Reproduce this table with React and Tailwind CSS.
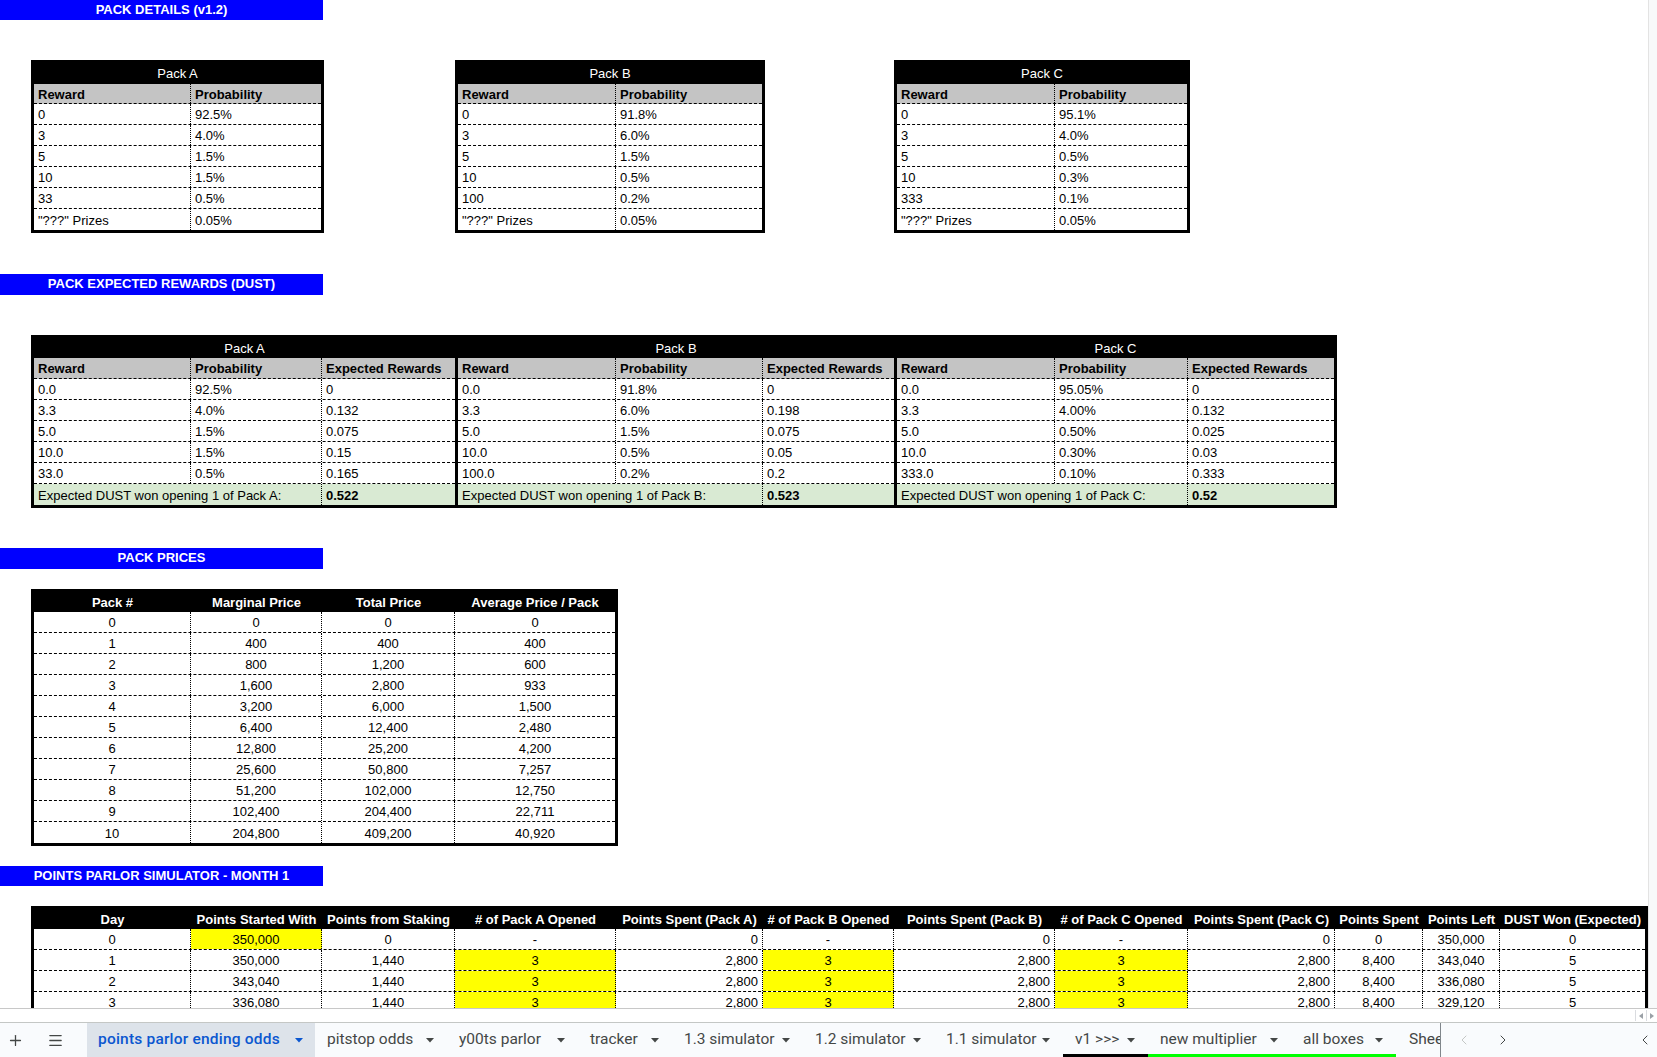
import React from "react";
import { Plus, Menu, ChevronLeft, ChevronRight } from "lucide-react";

function Cell({ w = "", last = false, align = "left", bold = false, bg = "", children }) {
  const al =
    align === "center"
      ? "justify-center"
      : align === "right"
      ? "justify-end pr-[4px]"
      : "justify-start pl-[4px]";
  return (
    <div
      className={`flex items-center h-full pt-[3px] whitespace-nowrap overflow-hidden ${al} ${
        bold ? "font-bold" : ""
      } ${last ? "flex-1" : `${w} shrink-0 border-r border-dotted border-black`} ${bg}`}
    >
      {children}
    </div>
  );
}

function Bar({ title, h }) {
  return (
    <div className={`w-[323px] ${h} bg-[#0000ff] text-white font-bold flex items-center justify-center`}>
      {title}
    </div>
  );
}

const DETAILS = [
  {
    name: "Pack A",
    outer: "w-[293px]",
    first: "w-[157px]",
    rows: [["0", "92.5%"], ["3", "4.0%"], ["5", "1.5%"], ["10", "1.5%"], ["33", "0.5%"], ['"???" Prizes', "0.05%"]],
  },
  {
    name: "Pack B",
    outer: "w-[310px] ml-[131px]",
    first: "w-[158px]",
    rows: [["0", "91.8%"], ["3", "6.0%"], ["5", "1.5%"], ["10", "0.5%"], ["100", "0.2%"], ['"???" Prizes', "0.05%"]],
  },
  {
    name: "Pack C",
    outer: "w-[296px] ml-[129px]",
    first: "w-[158px]",
    rows: [["0", "95.1%"], ["3", "4.0%"], ["5", "0.5%"], ["10", "0.3%"], ["333", "0.1%"], ['"???" Prizes', "0.05%"]],
  },
];

function PackDetail({ d }) {
  return (
    <div className={`${d.outer} shrink-0 border-[3px] border-black flex flex-col`}>
      <div className="h-[21px] pt-[2px] bg-black text-white flex items-center justify-center">{d.name}</div>
      <div className="flex h-[20px] bg-[#c4c4c4] border-b border-dashed border-black font-bold">
        <Cell w={d.first}>Reward</Cell>
        <Cell last>Probability</Cell>
      </div>
      {d.rows.map((r, i) => (
        <div
          key={i}
          className={`flex h-[21px] ${i < d.rows.length - 1 ? "border-b border-dashed border-black" : ""}`}
        >
          <Cell w={d.first}>{r[0]}</Cell>
          <Cell last>{r[1]}</Cell>
        </div>
      ))}
    </div>
  );
}

const EXP = [
  {
    name: "Pack A",
    block: "w-[421px]",
    c1: "w-[157px]",
    c2: "w-[131px]",
    tot: "w-[288px]",
    rows: [
      ["0.0", "92.5%", "0"],
      ["3.3", "4.0%", "0.132"],
      ["5.0", "1.5%", "0.075"],
      ["10.0", "1.5%", "0.15"],
      ["33.0", "0.5%", "0.165"],
    ],
    label: "Expected DUST won opening 1 of Pack A:",
    total: "0.522",
  },
  {
    name: "Pack B",
    block: "w-[439px] border-l-[3px] border-black",
    c1: "w-[158px]",
    c2: "w-[147px]",
    tot: "w-[305px]",
    rows: [
      ["0.0", "91.8%", "0"],
      ["3.3", "6.0%", "0.198"],
      ["5.0", "1.5%", "0.075"],
      ["10.0", "0.5%", "0.05"],
      ["100.0", "0.2%", "0.2"],
    ],
    label: "Expected DUST won opening 1 of Pack B:",
    total: "0.523",
  },
  {
    name: "Pack C",
    block: "flex-1 border-l-[3px] border-black",
    c1: "w-[158px]",
    c2: "w-[133px]",
    tot: "w-[291px]",
    rows: [
      ["0.0", "95.05%", "0"],
      ["3.3", "4.00%", "0.132"],
      ["5.0", "0.50%", "0.025"],
      ["10.0", "0.30%", "0.03"],
      ["333.0", "0.10%", "0.333"],
    ],
    label: "Expected DUST won opening 1 of Pack C:",
    total: "0.52",
  },
];

function ExpBlock({ e }) {
  return (
    <div className={`${e.block} shrink-0 flex flex-col`}>
      <div className="h-[20px] pt-[2px] bg-black text-white flex items-center justify-center">{e.name}</div>
      <div className="flex h-[21px] bg-[#c4c4c4] border-b border-dashed border-black font-bold">
        <Cell w={e.c1}>Reward</Cell>
        <Cell w={e.c2}>Probability</Cell>
        <Cell last>Expected Rewards</Cell>
      </div>
      {e.rows.map((r, i) => (
        <div key={i} className="flex h-[21px] border-b border-dashed border-black">
          <Cell w={e.c1}>{r[0]}</Cell>
          <Cell w={e.c2}>{r[1]}</Cell>
          <Cell last>{r[2]}</Cell>
        </div>
      ))}
      <div className="flex h-[21px] bg-[#d9ead3]">
        <Cell w={e.tot}>{e.label}</Cell>
        <Cell last bold>
          {e.total}
        </Cell>
      </div>
    </div>
  );
}

const PRICES = [
  ["0", "0", "0", "0"],
  ["1", "400", "400", "400"],
  ["2", "800", "1,200", "600"],
  ["3", "1,600", "2,800", "933"],
  ["4", "3,200", "6,000", "1,500"],
  ["5", "6,400", "12,400", "2,480"],
  ["6", "12,800", "25,200", "4,200"],
  ["7", "25,600", "50,800", "7,257"],
  ["8", "51,200", "102,000", "12,750"],
  ["9", "102,400", "204,400", "22,711"],
  ["10", "204,800", "409,200", "40,920"],
];
const PRICE_COLS = ["w-[157px]", "w-[131px]", "w-[133px]"];

const SIM_COLS = [
  "w-[157px]",
  "w-[131px]",
  "w-[133px]",
  "w-[161px]",
  "w-[147px]",
  "w-[131px]",
  "w-[161px]",
  "w-[133px]",
  "w-[147px]",
  "w-[88px]",
  "w-[77px]",
];
const SIM_HEAD = [
  "Day",
  "Points Started With",
  "Points from Staking",
  "# of Pack A Opened",
  "Points Spent (Pack A)",
  "# of Pack B Opened",
  "Points Spent (Pack B)",
  "# of Pack C Opened",
  "Points Spent (Pack C)",
  "Points Spent",
  "Points Left",
  "DUST Won (Expected)",
];
const SIM_ALIGN = [
  "center",
  "center",
  "center",
  "center",
  "right",
  "center",
  "right",
  "center",
  "right",
  "center",
  "center",
  "center",
];
const SIM_ROWS = [
  ["0", "350,000", "0", "-", "0", "-", "0", "-", "0", "0", "350,000", "0"],
  ["1", "350,000", "1,440", "3", "2,800", "3", "2,800", "3", "2,800", "8,400", "343,040", "5"],
  ["2", "343,040", "1,440", "3", "2,800", "3", "2,800", "3", "2,800", "8,400", "336,080", "5"],
  ["3", "336,080", "1,440", "3", "2,800", "3", "2,800", "3", "2,800", "8,400", "329,120", "5"],
];

function isYellow(ri, ci) {
  if (ri === 0) return ci === 1;
  return ci === 3 || ci === 5 || ci === 7;
}

function Tri({ color }) {
  return (
    <svg width="8" height="5" viewBox="0 0 8 5" className="shrink-0">
      <polygon points="0,0 8,0 4,4.5" fill={color} />
    </svg>
  );
}

const TABS = [
  { label: "pitstop odds", w: "w-[132px]" },
  { label: "y00ts parlor", w: "w-[131px]" },
  { label: "tracker", w: "w-[94px]" },
  { label: "1.3 simulator", w: "w-[131px]" },
  { label: "1.2 simulator", w: "w-[131px]" },
  { label: "1.1 simulator", w: "w-[129px]" },
  { label: "v1 >>>", w: "w-[85px]", line: "bg-black" },
  { label: "new multiplier", w: "w-[143px]", line: "bg-[#00ff00]" },
  { label: "all boxes", w: "w-[105px]", line: "bg-[#00ff00]" },
];

export default function App() {
  return (
    <div className="w-[1657px] h-[1057px] flex flex-col bg-white overflow-hidden font-['Liberation_Sans',Arial,sans-serif] text-[13px] text-black">
      {/* sheet area */}
      <div className="flex h-[1009px] shrink-0 border-b border-[#c8c8c8]">
        <div className="w-[1648px] shrink-0 overflow-hidden flex flex-col">
          <Bar title="PACK DETAILS (v1.2)" h="h-[20px]" />

          <div className="mt-[40px] pl-[31px] flex">
            {DETAILS.map((d) => (
              <PackDetail key={d.name} d={d} />
            ))}
          </div>

          <div className="mt-[41px]">
            <Bar title="PACK EXPECTED REWARDS (DUST)" h="h-[21px]" />
          </div>

          <div className="mt-[40px] ml-[31px] w-[1306px] border-[3px] border-black flex">
            {EXP.map((e) => (
              <ExpBlock key={e.name} e={e} />
            ))}
          </div>

          <div className="mt-[40px]">
            <Bar title="PACK PRICES" h="h-[21px]" />
          </div>

          <div className="mt-[20px] ml-[31px] w-[587px] border-[3px] border-black flex flex-col">
            <div className="flex h-[20px] bg-black text-white font-bold">
              <Cell w="w-[157px] !border-r-0" align="center">Pack #</Cell>
              <Cell w="w-[131px] !border-r-0" align="center">Marginal Price</Cell>
              <Cell w="w-[133px] !border-r-0" align="center">Total Price</Cell>
              <Cell last align="center">Average Price / Pack</Cell>
            </div>
            {PRICES.map((r, i) => (
              <div
                key={i}
                className={`flex h-[21px] ${i < PRICES.length - 1 ? "border-b border-dashed border-black" : ""}`}
              >
                {r.map((v, ci) =>
                  ci < 3 ? (
                    <Cell key={ci} w={PRICE_COLS[ci]} align="center">
                      {v}
                    </Cell>
                  ) : (
                    <Cell key={ci} last align="center">
                      {v}
                    </Cell>
                  )
                )}
              </div>
            ))}
          </div>

          <div className="mt-[20px]">
            <Bar title="POINTS PARLOR SIMULATOR - MONTH 1" h="h-[20px]" />
          </div>

          <div className="mt-[20px] ml-[31px] w-[1617px] shrink-0 border-[3px] border-black flex flex-col">
            <div className="flex h-[20px] bg-black text-white font-bold">
              {SIM_HEAD.map((h, ci) =>
                ci < 11 ? (
                  <Cell key={ci} w={`${SIM_COLS[ci]} !border-r-0`} align="center">
                    {h}
                  </Cell>
                ) : (
                  <Cell key={ci} last align="center">
                    {h}
                  </Cell>
                )
              )}
            </div>
            {SIM_ROWS.map((r, ri) => (
              <div key={ri} className="flex h-[21px] border-b border-dashed border-black">
                {r.map((v, ci) => {
                  const bg = isYellow(ri, ci) ? "bg-[#ffff00]" : "";
                  return ci < 11 ? (
                    <Cell key={ci} w={SIM_COLS[ci]} align={SIM_ALIGN[ci]} bg={bg}>
                      {v}
                    </Cell>
                  ) : (
                    <Cell key={ci} last align={SIM_ALIGN[ci]} bg={bg}>
                      {v}
                    </Cell>
                  );
                })}
              </div>
            ))}
          </div>
        </div>
        <div className="w-[9px] shrink-0 bg-[#f8f9fa] border-l border-[#e3e3e3]" />
      </div>

      {/* horizontal scrollbar row */}
      <div className="h-[13px] shrink-0 flex justify-end items-center bg-white">
        <div className="w-[11px] h-[11px] border-l border-[#dadce0] flex items-center justify-center">
          <svg width="4" height="6" viewBox="0 0 4 6">
            <polygon points="4,0 4,6 0,3" fill="#9aa0a6" />
          </svg>
        </div>
        <div className="w-[11px] h-[11px] border-l border-[#dadce0] flex items-center justify-center">
          <svg width="4" height="6" viewBox="0 0 4 6">
            <polygon points="0,0 0,6 4,3" fill="#9aa0a6" />
          </svg>
        </div>
      </div>

      {/* tab bar */}
      <div className="h-[35px] shrink-0 border-t border-[#c4c7c5] bg-[#f9fbfd] flex items-stretch font-['Roboto',sans-serif] text-[15.5px] text-[#444746]">
        <div className="w-[30px] shrink-0 flex items-center justify-center">
          <Plus size={17} strokeWidth={1.8} color="#444746" />
        </div>
        <div className="w-[50px] shrink-0 flex items-center justify-center">
          <Menu size={17} strokeWidth={1.8} color="#444746" />
        </div>
        <div className="ml-[7px] w-[1354px] shrink-0 flex items-stretch overflow-hidden border-r border-[#80868b]">
          <div className="w-[228px] shrink-0 bg-[#dde3ea] flex items-center pl-[11px] pr-[12px] text-[#0b57d0] font-medium tracking-[0.2px]">
            <span className="whitespace-nowrap">points parlor ending odds</span>
            <span className="ml-auto">
              <Tri color="#0b57d0" />
            </span>
          </div>
          {TABS.map((t) => (
            <div key={t.label} className={`${t.w} shrink-0 relative flex items-center pl-[12px] pr-[13px]`}>
              <span className="whitespace-nowrap">{t.label}</span>
              <span className="ml-auto">
                <Tri color="#444746" />
              </span>
              {t.line ? <div className={`absolute left-0 right-0 bottom-0 h-[3px] ${t.line}`} /> : null}
            </div>
          ))}
          <div className="w-[60px] shrink-0 flex items-center pl-[13px]">
            <span className="whitespace-nowrap">Sheet1</span>
          </div>
        </div>
        <div className="ml-[15px] w-[16px] shrink-0 flex items-center justify-center">
          <ChevronLeft size={16} strokeWidth={1.5} color="#c4c7c5" />
        </div>
        <div className="ml-[23px] w-[16px] shrink-0 flex items-center justify-center">
          <ChevronRight size={16} strokeWidth={1.5} color="#444746" />
        </div>
        <div className="ml-auto mr-[4px] w-[16px] shrink-0 flex items-center justify-center">
          <ChevronLeft size={16} strokeWidth={1.5} color="#444746" />
        </div>
      </div>
    </div>
  );
}
